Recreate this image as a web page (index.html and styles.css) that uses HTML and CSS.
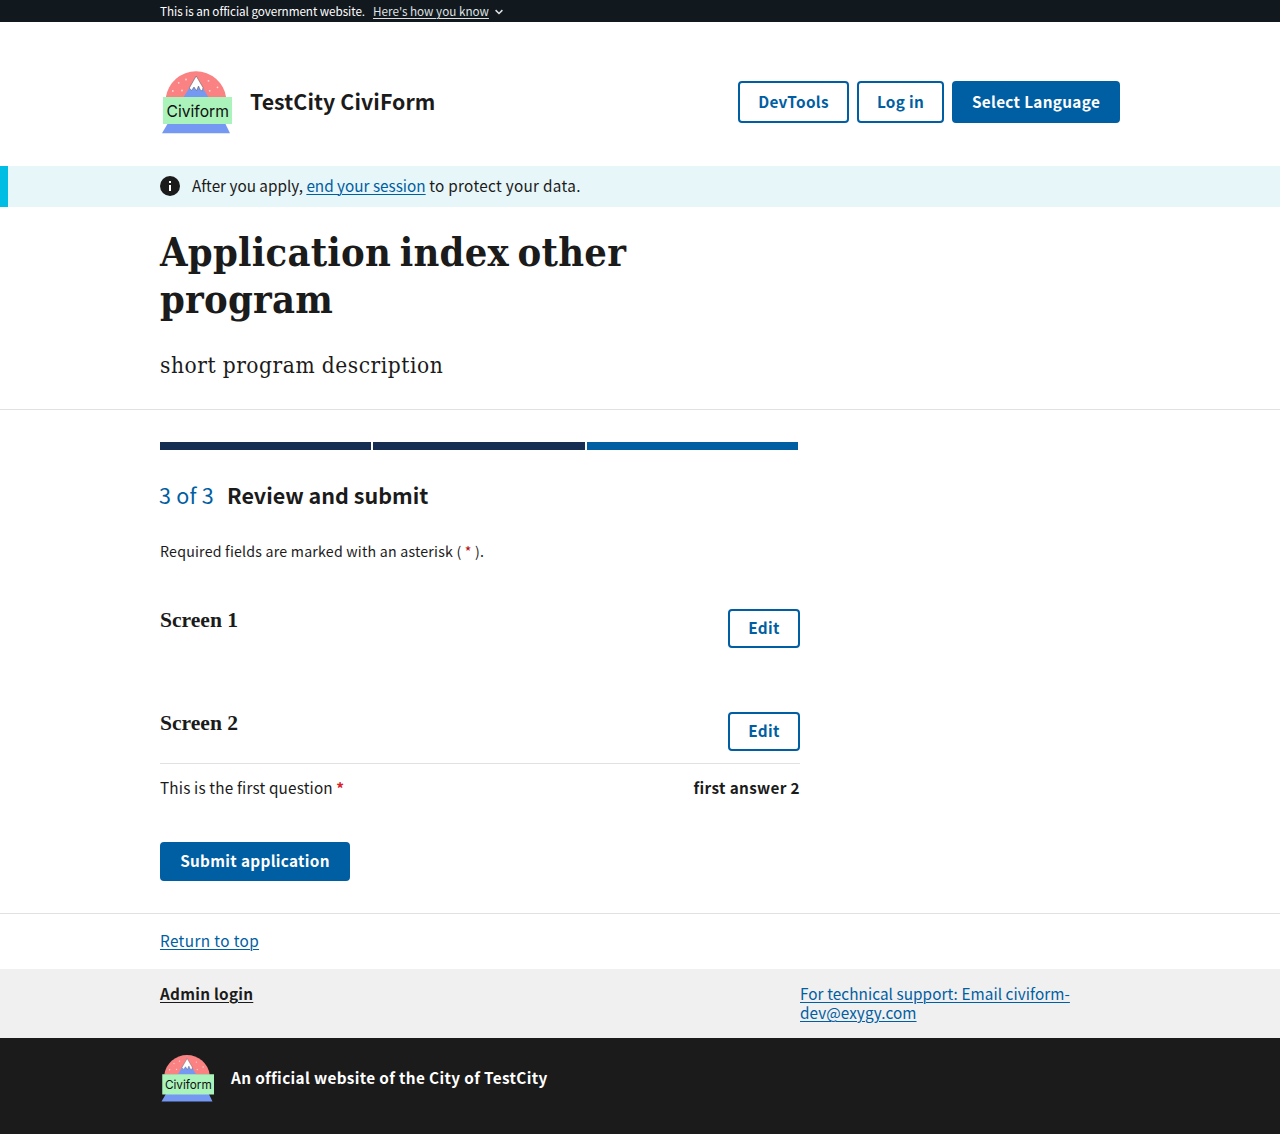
FILE: index.html
```html
<!DOCTYPE html>
<html lang="en">
<head>
<meta charset="utf-8">
<title>Application index other program</title>
<link rel="stylesheet" href="styles.css">
</head>
<body>
<div class="banner"><div class="container banner-row">
  <span class="official">This is an official government website.</span>
  <a class="how">Here's how you know</a>
  <svg class="chevron" width="8" height="6" viewBox="0 0 8 6"><path d="M.6 1.100L4 4.500L7.400 1.100" fill="none" stroke="#dfe1e2" stroke-width="1.500"/></svg>
</div></div>
<header class="container header">
  <svg class="logo" width="72" height="64" viewBox="0 0 72 64">
    <g id="logo">
      <path d="M5.800 27.500A30.500 30.500 0 0 1 66.200 27.500Z" fill="#fa8282"/>
      <path d="M23.500 27.500L36 6.500L48.500 27.500Z" fill="#7598f3"/>
      <path d="M36.200 6L43 17.500L42.300 21L40.300 20L38.500 16L36.500 20.800L34 17L31.500 20.500L29.300 18Z" fill="#fff" stroke="#555" stroke-width=".5"/>
      <g fill="#ffd5d3"><circle cx="18.700" cy="12.800" r=".9"/><circle cx="26" cy="9.500" r=".9"/><circle cx="12.800" cy="21" r=".9"/><circle cx="22" cy="20.500" r=".9"/><circle cx="48.500" cy="10.800" r=".9"/><circle cx="57.500" cy="17.300" r=".9"/><circle cx="49.700" cy="20.800" r=".9"/></g>
      <path d="M8 53H65L70 63.300H2Z" fill="#7598f3"/>
      <path d="M3 27H72V54H3Z" fill="#aaf3ba"/>
      <text x="6.500" y="47.300" class="logo-text" textLength="62.500" lengthAdjust="spacingAndGlyphs">Civiform</text>
    </g>
  </svg>
  <span class="site-title">TestCity CiviForm</span>
  <nav class="actions">
    <a class="btn dev">DevTools</a><a class="btn login">Log in</a><a class="btn filled lang">Select Language</a>
  </nav>
</header>
<div class="alert"><div class="alert-row">
  <svg width="20" height="20" viewBox="0 0 20 20"><circle cx="10" cy="10" r="10" fill="#1b1b1b"/><path d="M9 5h2v2H9zM9 9h2v6H9z" fill="#fff"/></svg>
  <p>After you apply, <a>end your session</a> <span class="protect">to protect your data.</span></p>
</div></div>
<section class="intro"><div class="container">
  <h1>Application index other program</h1>
  <p class="desc">short program description</p>
</div></section>
<main class="container">
  <div class="content">
    <div class="steps"><i></i><i></i><i class="current"></i></div>
    <h2><span class="count">3 of 3</span><span>Review and submit</span></h2>
    <p class="required">Required fields are marked with an asterisk ( <b>*</b> ).</p>
    <section class="block"><h3>Screen 1</h3><a class="btn edit">Edit</a></section>
    <section class="block"><h3>Screen 2</h3><a class="btn edit">Edit</a></section>
    <div class="answer"><span><span class="question">This is the first question</span> <b class="star">*</b></span><b class="value">first answer 2</b></div>
    <a class="btn filled submit">Submit application</a>
  </div>
</main>
<div class="return"><div class="container"><a class="top">Return to top</a></div></div>
<footer>
  <div class="links"><div class="container link-grid">
    <a class="admin">Admin login</a>
    <a class="support">For technical support: Email civiform-<br>dev@exygy.com</a>
  </div></div>
  <div class="identity"><div class="container identity-row">
    <svg class="logo" width="54" height="48" viewBox="0 0 72 64"><use href="#logo"/></svg>
    <span class="id-text">An official website of the City of TestCity</span>
  </div></div>
</footer>
</body>
</html>
```
FILE: styles.css
```css
* { box-sizing: border-box; }
body { margin: 0; background: #fff; color: #1b1b1b; font: 15.3px/19px "Noto Sans CJK SC", "Open Sans", sans-serif; }
h1, h2, h3, p { margin: 0; }
a { color: #005ea2; text-decoration: underline; text-underline-offset: 2px; text-decoration-thickness: 1px; white-space: nowrap; }
.logo-text { font: 16.5px Inter, sans-serif; fill: #111; }
.container { width: 960px; margin: 0 auto; }
.banner { background: #11181e; height: 22px; color: #fff; font-size: 11.7px; line-height: 22px; }
.banner-row { display: flex; align-items: center; }
.official { letter-spacing: -.06px; }
.how { margin-left: 8px; color: #dfe1e2; }
.chevron { margin: 2px 0 0 6px; }
.header { display: flex; align-items: center; height: 144px; padding: 48px 0 32px; }
.site-title { margin-left: 18px; padding-bottom: 2px; font-size: 21.300px; line-height: 28px; font-weight: 700; letter-spacing: .1px; }
.actions { display: flex; gap: 8px; margin-left: auto; }
.btn { display: flex; align-items: center; justify-content: center; height: 42px; padding-bottom: 2px; border: 2px solid #005ea2; border-radius: 4px; font-weight: 700; letter-spacing: .33px; text-decoration: none; }
.filled { background: #005ea2; color: #fff; }
.dev { width: 111px; }
.login { width: 87px; }
.lang { width: 168px; }
.alert { height: 41px; border-left: 8px solid #00bde3; background: #e7f6f8; padding-left: 152px; }
.alert-row { display: flex; align-items: center; gap: 12px; height: 40px; }
.alert p { padding-bottom: 2px; }
.protect { letter-spacing: .3px; }
.intro { height: 203px; padding-top: 22px; border-bottom: 1px solid #dfe1e2; }
h1 { width: 520px; font: bold 39.500px/47px "DejaVu Serif Condensed", "DejaVu Serif", serif; letter-spacing: .25px; word-spacing: -4px; }
.desc { margin-top: 29px; font: 22.500px/26px "DejaVu Serif Condensed", "DejaVu Serif", serif; letter-spacing: .55px; word-spacing: -.5px; }
.content { width: 640px; padding: 32px 0; }
.steps { display: flex; }
.steps i { flex: 1; height: 8px; margin-right: 2px; background: #162e51; }
.steps .current { background: #005ea2; }
h2 { display: flex; gap: 13px; margin: 30px 0 0 -1px; font-size: 21.500px; line-height: 30px; }
.count { color: #005ea2; font-weight: 400; letter-spacing: .25px; }
.required { margin-top: 31px; font-size: 14.200px; line-height: 20px; letter-spacing: .21px; }
.required b { color: #b50909; font-weight: 400; }
.block { display: flex; justify-content: space-between; align-items: flex-start; margin-top: 48px; }
.block + .block { margin-top: 64px; }
h3 { font: bold 21.600px/22px "Liberation Serif", serif; }
.edit { width: 72px; height: 39px; }
.answer { display: flex; justify-content: space-between; margin-top: 12px; border-top: 1px solid #dfe1e2; padding-top: 14px; }
.question { letter-spacing: .16px; }
.star { color: #d8232a; }
.value { letter-spacing: .35px; }
.submit { width: 190px; height: 39px; margin-top: 45px; }
.return { height: 56px; border-top: 1px solid #dfe1e2; padding-top: 17px; }
.top { letter-spacing: .38px; }
.links { height: 69px; background: #f0f0f0; padding-top: 15px; }
.link-grid { display: grid; grid-template-columns: 640px 320px; }
.admin { color: #1b1b1b; font-weight: 700; letter-spacing: .27px; justify-self: start; }
.support { letter-spacing: .07px; }
.identity { height: 96px; background: #1b1b1b; color: #fff; padding-top: 16px; }
.identity-row { display: flex; align-items: center; gap: 17px; font-weight: 700; }
.id-text { padding-bottom: 2px; letter-spacing: .36px; }
```
